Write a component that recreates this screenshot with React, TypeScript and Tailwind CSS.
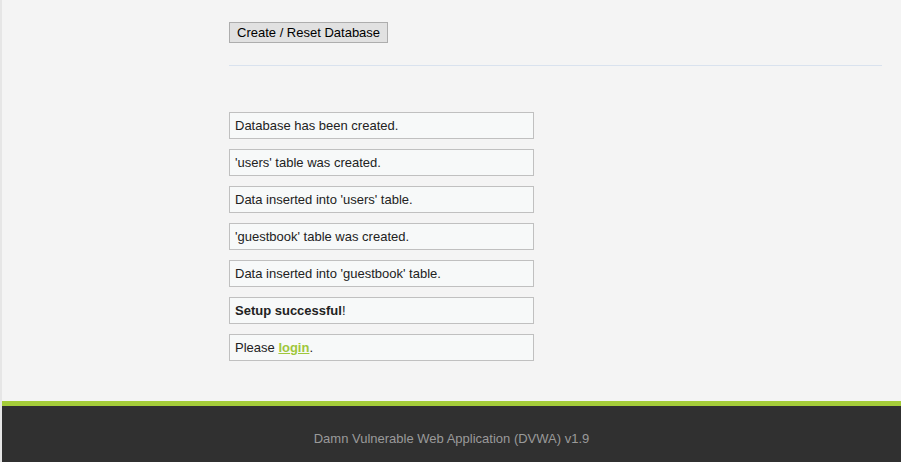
export default function App() {
  const messages: React.ReactNode[] = [
    "Database has been created.",
    "'users' table was created.",
    "Data inserted into 'users' table.",
    "'guestbook' table was created.",
    "Data inserted into 'guestbook' table.",
    <>
      <b>Setup successful</b>!
    </>,
    <>
      Please{" "}
      <a href="#" className="font-bold text-[#9fc73c] underline">
        login
      </a>
      .
    </>,
  ];

  return (
    <div className="flex h-[462px] bg-[#e6e6e6] pl-[2px] font-['Liberation_Sans',Arial,sans-serif] text-[13px] text-[#000]">
      <div className="flex flex-1 flex-col bg-[#f4f4f4]">
        <main className="flex-1 pl-[227px] pr-[19px] pt-[22px]">
          <button className="h-[21px] border border-[#adadad] bg-[#e1e1e1] px-[7px] text-[13px] leading-[19px] text-black">
            Create / Reset Database
          </button>
          <hr className="mt-[22px] border-0 border-t border-[#d9e2ee]" />
          <div className="mt-[46px] flex flex-col gap-[10px]">
            {messages.map((m, i) => (
              <div
                key={i}
                className="h-[27px] w-[305px] border border-[#c0c0c0] bg-[#f7f9f9] pl-[5px] leading-[25px] text-[#222]"
              >
                {m}
              </div>
            ))}
          </div>
        </main>
        <footer className="h-[61px] border-t-[5px] border-[#a4cc39] bg-[#303030] pt-[23px] text-center text-[13px] text-[#9a9a9a]">
          Damn Vulnerable Web Application (DVWA) v1.9
        </footer>
      </div>
    </div>
  );
}
